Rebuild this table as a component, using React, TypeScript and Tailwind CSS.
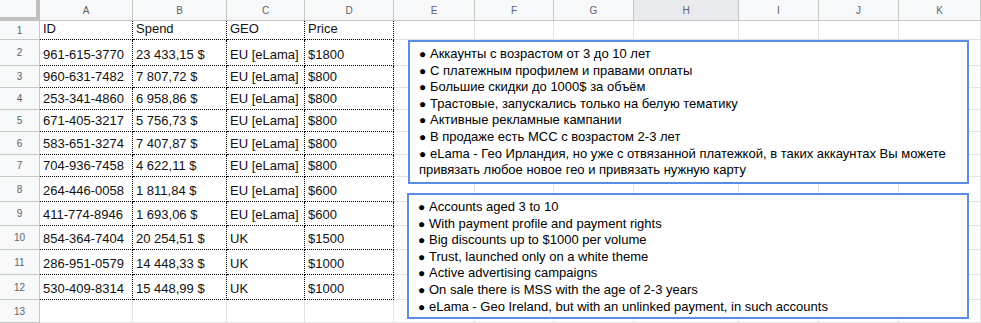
const cols = ['A', 'B', 'C', 'D', 'E', 'F', 'G', 'H', 'I', 'J', 'K'];

const gridCols =
  'grid grid-cols-[40px_93px_94px_78px_89px_81px_79px_80px_105px_80px_80px_82px]';

// row heights, rows 1..13
const rowH = [
  'h-[19px]',
  'h-[26px]',
  'h-[22px]',
  'h-[22px]',
  'h-[22px]',
  'h-[23px]',
  'h-[22px]',
  'h-[25px]',
  'h-[24px]',
  'h-[24px]',
  'h-[25px]',
  'h-[25px]',
  'h-[23px]',
];

const data: string[][] = [
  ['ID', 'Spend', 'GEO', 'Price'],
  ['961-615-3770', '23 433,15 $', 'EU [eLama]', '$1800'],
  ['960-631-7482', '7 807,72 $', 'EU [eLama]', '$800'],
  ['253-341-4860', '6 958,86 $', 'EU [eLama]', '$800'],
  ['671-405-3217', '5 756,73 $', 'EU [eLama]', '$800'],
  ['583-651-3274', '7 407,87 $', 'EU [eLama]', '$800'],
  ['704-936-7458', '4 622,11 $', 'EU [eLama]', '$800'],
  ['264-446-0058', '1 811,84 $', 'EU [eLama]', '$600'],
  ['411-774-8946', '1 693,06 $', 'EU [eLama]', '$600'],
  ['854-364-7404', '20 254,51 $', 'UK', '$1500'],
  ['286-951-0579', '14 448,33 $', 'UK', '$1000'],
  ['530-409-8314', '15 448,99 $', 'UK', '$1000'],
];

const ruLines = [
  'Аккаунты с возрастом от 3 до 10 лет',
  'С платежным профилем и правами оплаты',
  'Большие скидки до 1000$ за объём',
  'Трастовые, запускались только на белую тематику',
  'Активные рекламные кампании',
  'В продаже есть МСС с возрастом 2-3 лет',
  'eLama - Гео Ирландия, но уже с отвязанной платежкой, в таких аккаунтах Вы можете привязать любое новое гео и привязать нужную карту',
];

const enLines = [
  'Accounts aged 3 to 10',
  'With payment profile and payment rights',
  'Big discounts up to $1000 per volume',
  'Trust, launched only on a white theme',
  'Active advertising campaigns',
  'On sale there is MSS with the age of 2-3 years',
  'eLama - Geo Ireland, but with an unlinked payment, in such accounts',
];

function BulletBox({ lines, className }: { lines: string[]; className: string }) {
  return (
    <div
      className={`absolute bg-white border-2 border-[#5a8ee6] pl-[9px] pr-[8px] pt-[4px] text-[13px] leading-[16.6px] text-black overflow-hidden ${className}`}
    >
      {lines.map((l, i) => (
        <div key={i}>
          <span className="inline-block w-[11px] text-[12px]">●</span>
          {l}
        </div>
      ))}
    </div>
  );
}

export default function App() {
  return (
    <div className="relative w-[981px] h-[323px] overflow-hidden bg-white font-['Liberation_Sans',Arial,sans-serif]">
      {/* column headers */}
      <div className={`${gridCols} h-[21px]`}>
        <div className="bg-[#f8f9fa] border-r-4 border-b-4 border-[#c0c0c0]" />
        {cols.map((c) => (
          <div
            key={c}
            className={`flex items-center justify-center border-r border-b border-[#c4c7c5] text-[10px] text-[#5f6368] ${
              c === 'H' ? 'bg-[#e8eaed]' : 'bg-[#f8f9fa]'
            }`}
          >
            {c}
          </div>
        ))}
      </div>

      {/* rows */}
      {rowH.map((h, r) => (
        <div key={r} className={`${gridCols} ${h}`}>
          <div className="flex items-center justify-center bg-[#f8f9fa] border-r border-b border-[#c4c7c5] text-[10px] text-[#5f6368]">
            {r + 1}
          </div>
          {cols.map((c, ci) => {
            const inTable = ci < 4 && r < 12;
            const val = inTable ? data[r][ci] : '';
            return (
              <div
                key={c}
                className={`flex items-end pl-[3px] pb-[2px] text-[13px] leading-[16px] text-[#111] whitespace-nowrap overflow-hidden border-r border-b ${
                  inTable ? 'border-dotted border-black' : 'border-[#e2e3e3]'
                }`}
              >
                {val}
              </div>
            );
          })}
        </div>
      ))}

      <BulletBox lines={ruLines} className="left-[408px] top-[40px] w-[561px] h-[144px]" />
      <BulletBox lines={enLines} className="left-[407px] top-[193px] w-[562px] h-[126px]" />
    </div>
  );
}
